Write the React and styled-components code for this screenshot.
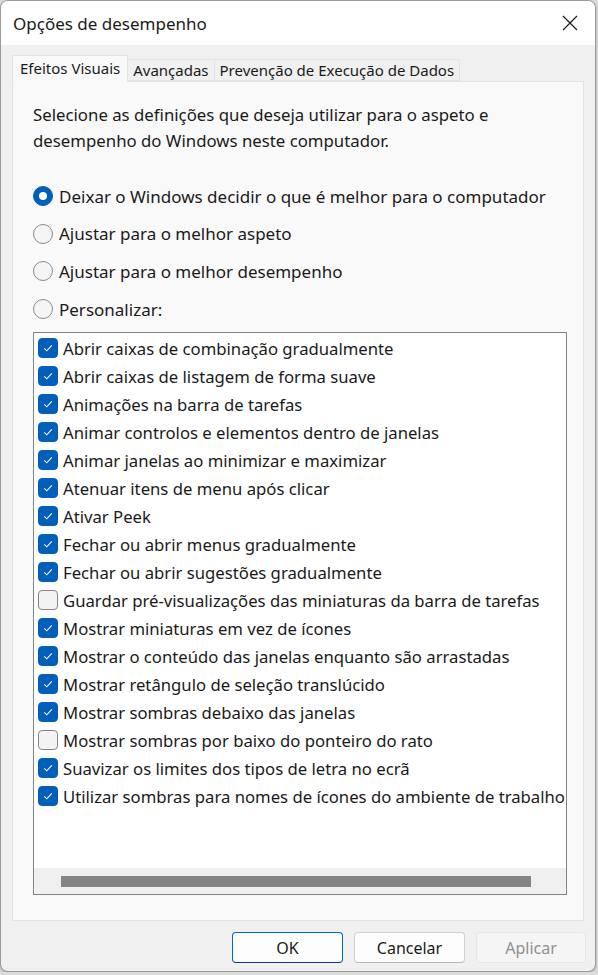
import React from "react";
import styled, { createGlobalStyle } from "styled-components";

const GlobalStyle = createGlobalStyle`
  html, body {
    margin: 0;
    padding: 0;
    background: #dcdcdc;
  }
  body {
    font-family: "Noto Sans", "Open Sans", sans-serif;
    color: #1a1a1a;
  }
`;

const Window = styled.div`
  width: 596px;
  height: 972px;
  box-sizing: border-box;
  border: 1px solid #9a9a9a;
  border-radius: 8px;
  overflow: hidden;
  background: #f0f0f0;
  display: flex;
  flex-direction: column;
  box-shadow: 0 1px 3px rgba(0, 0, 0, 0.25);
`;

const TitleBar = styled.div`
  height: 44px;
  flex: none;
  background: #ffffff;
  display: flex;
  align-items: center;
  justify-content: space-between;
  padding: 0 12px 0 12px;
`;

const Title = styled.span`
  font-size: 17px;
  color: #1a1a1a;
`;

const Close = styled.button`
  width: 26px;
  height: 26px;
  border: none;
  background: transparent;
  padding: 0;
  display: flex;
  align-items: center;
  justify-content: center;
`;

const Body = styled.div`
  flex: 1;
  display: flex;
  flex-direction: column;
  padding: 10px 11px 0 11px;
`;

const Tabs = styled.div`
  display: flex;
  align-items: flex-end;
  height: 26px;
  position: relative;
  z-index: 1;
`;

const Tab = styled.div`
  box-sizing: border-box;
  height: ${(p) => (p.$active ? "27px" : "22px")};
  padding: 0 ${(p) => (p.$active ? "7px" : "5px")};
  margin-left: ${(p) => (p.$active ? "0" : "-1px")};
  display: flex;
  align-items: center;
  padding-bottom: ${(p) => (p.$active ? "2px" : "1px")};
  font-size: 15px;
  color: #1a1a1a;
  background: ${(p) => (p.$active ? "#f9f9f9" : "#f0f0f0")};
  border: 1px solid #e3e3e3;
  border-bottom: ${(p) => (p.$active ? "1px solid #f9f9f9" : "1px solid #e3e3e3")};
  margin-bottom: ${(p) => (p.$active ? "-1px" : "0")};
`;

const Panel = styled.div`
  box-sizing: border-box;
  height: 840px;
  background: #f9f9f9;
  border: 1px solid #e3e3e3;
  padding: 20px 17px 0 20px;
  display: flex;
  flex-direction: column;
`;

const Description = styled.p`
  margin: 0;
  font-size: 16.8px;
  line-height: 26px;
  color: #1a1a1a;
`;

const Options = styled.div`
  margin-top: 32px;
  display: flex;
  flex-direction: column;
  gap: 17.7px;
  margin-bottom: 13px;
`;

const RadioRow = styled.label`
  display: flex;
  align-items: center;
  gap: 6px;
  font-size: 17px;
  height: 20px;
  color: #1a1a1a;
`;

const RadioCircle = styled.span`
  box-sizing: border-box;
  width: 20px;
  height: 20px;
  flex: none;
  border-radius: 50%;
  display: flex;
  align-items: center;
  justify-content: center;
  background: ${(p) => (p.$on ? "#005fb8" : "#f5f5f5")};
  border: 1px solid ${(p) => (p.$on ? "#005fb8" : "#8a8a8a")};
  &::after {
    content: "";
    display: ${(p) => (p.$on ? "block" : "none")};
    width: 8px;
    height: 8px;
    border-radius: 50%;
    background: #ffffff;
  }
`;

const ListBox = styled.div`
  box-sizing: border-box;
  width: 534px;
  height: 563px;
  background: #ffffff;
  border: 1px solid #828282;
  display: flex;
  flex-direction: column;
  overflow: hidden;
`;

const ListItems = styled.div`
  flex: 1;
  padding: 1px 0 0 4px;
  overflow: hidden;
`;

const Item = styled.div`
  height: 28px;
  display: flex;
  align-items: center;
  gap: 5px;
  font-size: 16.7px;
  white-space: nowrap;
  color: #1a1a1a;
`;

const Box = styled.span`
  box-sizing: border-box;
  width: 20px;
  height: 20px;
  flex: none;
  border-radius: 4px;
  display: flex;
  align-items: center;
  justify-content: center;
  background: ${(p) => (p.$on ? "#005fb8" : "#f3f3f3")};
  border: 1px solid ${(p) => (p.$on ? "#005fb8" : "#858585")};
`;

const HScroll = styled.div`
  height: 26px;
  flex: none;
  background: #f0f0f0;
  display: flex;
  align-items: center;
  padding: 0 35px 0 27px;
`;

const Thumb = styled.div`
  flex: 1;
  height: 11px;
  background: #858585;
`;

const Footer = styled.div`
  display: flex;
  justify-content: flex-end;
  gap: 11px;
  padding: 11px 0 0 0;
  margin-right: -2px;
`;

const Button = styled.button`
  box-sizing: border-box;
  width: ${(p) => (p.$disabled ? "110px" : "111px")};
  height: 31px;
  border-radius: 4px;
  font-family: "Noto Sans", "Open Sans", sans-serif;
  font-size: 16px;
  background: ${(p) => (p.$disabled ? "#f5f5f5" : "#fdfdfd")};
  color: ${(p) => (p.$disabled ? "#8f8f8f" : "#1a1a1a")};
  border: 1px solid
    ${(p) => (p.$primary ? "#0067c0" : p.$disabled ? "#e6e6e6" : "#d0d0d0")};
  border-bottom-color: ${(p) =>
    p.$primary ? "#003e92" : p.$disabled ? "#e6e6e6" : "#b8b8b8"};
  padding: 0;
`;

const Check = () => (
  <svg width="12" height="12" viewBox="0 0 12 12">
    <path d="M2.2 6.3 L4.8 8.8 L9.8 3.4" fill="none" stroke="#fff" strokeWidth="1.1" />
  </svg>
);

const items = [
  ["Abrir caixas de combinação gradualmente", true],
  ["Abrir caixas de listagem de forma suave", true],
  ["Animações na barra de tarefas", true],
  ["Animar controlos e elementos dentro de janelas", true],
  ["Animar janelas ao minimizar e maximizar", true],
  ["Atenuar itens de menu após clicar", true],
  ["Ativar Peek", true],
  ["Fechar ou abrir menus gradualmente", true],
  ["Fechar ou abrir sugestões gradualmente", true],
  ["Guardar pré-visualizações das miniaturas da barra de tarefas", false],
  ["Mostrar miniaturas em vez de ícones", true],
  ["Mostrar o conteúdo das janelas enquanto são arrastadas", true],
  ["Mostrar retângulo de seleção translúcido", true],
  ["Mostrar sombras debaixo das janelas", true],
  ["Mostrar sombras por baixo do ponteiro do rato", false],
  ["Suavizar os limites dos tipos de letra no ecrã", true],
  ["Utilizar sombras para nomes de ícones do ambiente de trabalho", true],
];

const radios = [
  ["Deixar o Windows decidir o que é melhor para o computador", true],
  ["Ajustar para o melhor aspeto", false],
  ["Ajustar para o melhor desempenho", false],
  ["Personalizar:", false],
];

export default function App() {
  return (
    <>
      <GlobalStyle />
      <Window>
        <TitleBar>
          <Title>Opções de desempenho</Title>
          <Close aria-label="Fechar">
            <svg width="18" height="18" viewBox="0 0 18 18">
              <path d="M2 2 L16 16 M16 2 L2 16" stroke="#1a1a1a" strokeWidth="1.2" />
            </svg>
          </Close>
        </TitleBar>
        <Body>
          <Tabs>
            <Tab $active>Efeitos Visuais</Tab>
            <Tab>Avançadas</Tab>
            <Tab>Prevenção de Execução de Dados</Tab>
          </Tabs>
          <Panel>
            <Description>
              Selecione as definições que deseja utilizar para o aspeto e
              <br />
              desempenho do Windows neste computador.
            </Description>
            <Options>
              {radios.map(([label, on]) => (
                <RadioRow key={label}>
                  <RadioCircle $on={on} />
                  {label}
                </RadioRow>
              ))}
            </Options>
            <ListBox>
              <ListItems>
                {items.map(([label, on]) => (
                  <Item key={label}>
                    <Box $on={on}>{on && <Check />}</Box>
                    {label}
                  </Item>
                ))}
              </ListItems>
              <HScroll>
                <Thumb />
              </HScroll>
            </ListBox>
          </Panel>
          <Footer>
            <Button $primary>OK</Button>
            <Button>Cancelar</Button>
            <Button $disabled>Aplicar</Button>
          </Footer>
        </Body>
      </Window>
    </>
  );
}
